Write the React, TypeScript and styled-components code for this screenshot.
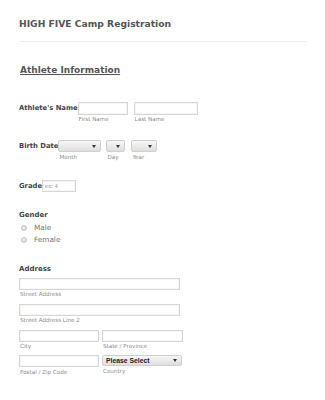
import React from 'react';
import styled, { createGlobalStyle } from 'styled-components';

const GlobalStyle = createGlobalStyle`
  html, body {
    margin: 0;
    padding: 0;
    background: #fff;
  }
  body {
    font-family: "DejaVu Sans", Verdana, sans-serif;
    color: #555;
  }
`;

const Page = styled.div`
  width: 325px;
  height: 400px;
  overflow: hidden;
  padding: 18px 18px 0 19px;
  box-sizing: border-box;
`;

const Title = styled.h1`
  margin: 0;
  font-size: 9.2px;
  line-height: 12px;
  font-weight: bold;
  color: #555;
`;

const Divider = styled.hr`
  margin: 11px 0 0;
  border: 0;
  height: 1px;
  width: 288px;
  background: #efefef;
`;

const SectionTitle = styled.h2`
  margin: 22px 0 0;
  padding-left: 1px;
  font-size: 9px;
  line-height: 12px;
  font-weight: bold;
  color: #555;
  text-decoration: underline;
`;

const Row = styled.div<{ $gap: number }>`
  display: flex;
  align-items: flex-start;
  margin-top: ${(p) => p.$gap}px;
`;

const InlineLabel = styled.label<{ $h: number }>`
  font-size: 6.8px;
  font-weight: bold;
  line-height: ${(p) => p.$h}px;
  color: #444;
  white-space: nowrap;
`;

const BlockLabel = styled.div<{ $gap: number }>`
  margin-top: ${(p) => p.$gap}px;
  font-size: 7px;
  font-weight: bold;
  line-height: 10px;
  color: #444;
`;

const Group = styled.div<{ $ml?: number }>`
  display: flex;
  flex-direction: column;
  margin-left: ${(p) => p.$ml ?? 0}px;
`;

const Input = styled.div<{ $w: number; $h?: number }>`
  width: ${(p) => p.$w}px;
  height: ${(p) => p.$h ?? 12}px;
  box-sizing: border-box;
  border: 1px solid #d6d6d6;
  background: #fff;
  box-shadow: inset 0 0 0 1px #f6f6f6;
`;

const Placeholder = styled.span`
  display: block;
  font-family: "Liberation Serif", "Times New Roman", serif;
  font-size: 6.5px;
  line-height: 10px;
  color: #999;
  padding-left: 2px;
`;

const Select = styled.div<{ $w: number; $h?: number }>`
  position: relative;
  width: ${(p) => p.$w}px;
  height: ${(p) => p.$h ?? 12}px;
  box-sizing: border-box;
  border: 1px solid #cfcfcf;
  border-radius: 2px;
  background: linear-gradient(#f7f7f7, #dedede);
  display: flex;
  align-items: center;
  padding-left: 3px;
  font-family: "Liberation Sans", Arial, sans-serif;
  font-size: 6.8px;
  font-weight: bold;
  color: #222;
  &::after {
    content: "";
    position: absolute;
    right: 4px;
    top: 50%;
    margin-top: -1.5px;
    border-left: 2px solid transparent;
    border-right: 2px solid transparent;
    border-top: 3px solid #333;
  }
`;

const Sub = styled.span<{ $mt?: number }>`
  display: block;
  margin-top: ${(p) => p.$mt ?? 1}px;
  padding-left: 1px;
  font-size: 5.6px;
  line-height: 7px;
  color: #8c8c8c;
  white-space: nowrap;
`;

const Options = styled.div`
  display: flex;
  flex-direction: column;
  margin-top: 2px;
`;

const Option = styled.div`
  display: flex;
  align-items: center;
  height: 12px;
  font-size: 7.3px;
  font-weight: normal;
  color: #747474;
`;

const Radio = styled.span`
  width: 6px;
  height: 6px;
  margin: 0 7px 0 2px;
  border-radius: 50%;
  box-sizing: border-box;
  border: 1px solid #c4c4c4;
  background: radial-gradient(circle at 40% 35%, #f2f2f2, #cfcfcf);
`;

const Stack = styled.div<{ $gap: number }>`
  margin-top: ${(p) => p.$gap}px;
  display: flex;
  gap: 3px;
`;

export default function App() {
  return (
    <>
      <GlobalStyle />
      <Page>
        <Title>HIGH FIVE Camp Registration</Title>
        <Divider />
        <SectionTitle>Athlete Information</SectionTitle>

        <Row $gap={26}>
          <InlineLabel $h={13}>Athlete's Name</InlineLabel>
          <Group>
            <Input $w={50} $h={13} />
            <Sub>First Name</Sub>
          </Group>
          <Group $ml={6}>
            <Input $w={64} $h={13} />
            <Sub>Last Name</Sub>
          </Group>
        </Row>

        <Row $gap={17}>
          <InlineLabel $h={12}>Birth Date</InlineLabel>
          <Group>
            <Select $w={43} />
            <Sub $mt={1.5}>Month</Sub>
          </Group>
          <Group $ml={5}>
            <Select $w={19} />
            <Sub $mt={1.5}>Day</Sub>
          </Group>
          <Group $ml={6}>
            <Select $w={26} />
            <Sub $mt={1.5}>Year</Sub>
          </Group>
        </Row>

        <Row $gap={19}>
          <InlineLabel $h={12}>Grade</InlineLabel>
          <Input $w={34}>
            <Placeholder>ex: 4</Placeholder>
          </Input>
        </Row>

        <BlockLabel $gap={18}>Gender</BlockLabel>
        <Options>
          <Option>
            <Radio />
            Male
          </Option>
          <Option>
            <Radio />
            Female
          </Option>
        </Options>

        <BlockLabel $gap={18}>Address</BlockLabel>
        <Stack $gap={4}>
          <Group>
            <Input $w={161} />
            <Sub>Street Address</Sub>
          </Group>
        </Stack>
        <Stack $gap={6}>
          <Group>
            <Input $w={161} />
            <Sub>Street Address Line 2</Sub>
          </Group>
        </Stack>
        <Stack $gap={6}>
          <Group>
            <Input $w={80} />
            <Sub>City</Sub>
          </Group>
          <Group>
            <Input $w={81} />
            <Sub>State / Province</Sub>
          </Group>
        </Stack>
        <Stack $gap={5}>
          <Group>
            <Input $w={80} />
            <Sub $mt={2}>Postal / Zip Code</Sub>
          </Group>
          <Group>
            <Select $w={80} $h={11}>Please Select</Select>
            <Sub $mt={2}>Country</Sub>
          </Group>
        </Stack>
      </Page>
    </>
  );
}
